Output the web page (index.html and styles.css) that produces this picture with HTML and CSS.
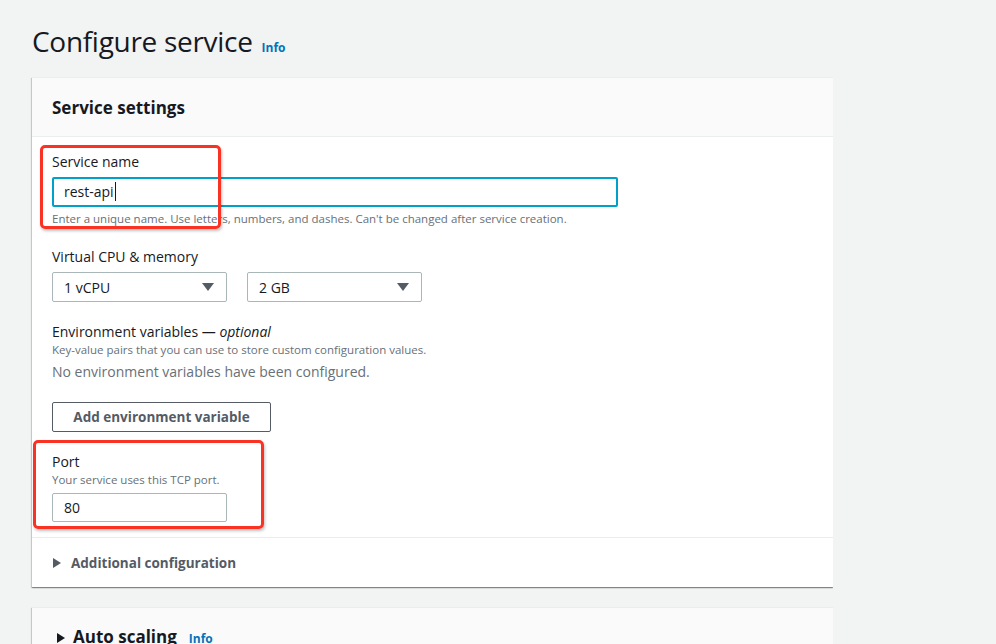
FILE: index.html
```html
<!DOCTYPE html>
<html>
<head>
<meta charset="utf-8">
<link rel="stylesheet" href="styles.css">
</head>
<body>
<div class="page">
  <h1 class="title">Configure service <a class="info">Info</a></h1>

  <div class="card">
    <div class="card-header"><h2>Service settings</h2></div>
    <div class="card-body">
      <div class="field">
        <div class="label">Service name</div>
        <div class="input focused wide"><span class="caret">rest-api</span></div>
        <div class="hint">Enter a unique name. Use letters, numbers, and dashes. Can't be changed after service creation.</div>
      </div>

      <div class="field">
        <div class="label">Virtual CPU &amp; memory</div>
        <div class="selects">
          <div class="select"><span>1 vCPU</span><span class="tri"></span></div>
          <div class="select"><span>2 GB</span><span class="tri"></span></div>
        </div>
      </div>

      <div class="field">
        <div class="label">Environment variables — <i>optional</i></div>
        <div class="hint">Key-value pairs that you can use to store custom configuration values.</div>
        <div class="empty">No environment variables have been configured.</div>
        <button class="btn">Add environment variable</button>
      </div>

      <div class="field">
        <div class="label">Port</div>
        <div class="hint">Your service uses this TCP port.</div>
        <div class="input small">80</div>
      </div>
    </div>
    <div class="card-footer">
      <span class="rtri"></span><span class="expander">Additional configuration</span>
    </div>
  </div>

  <div class="card card2">
    <div class="card-header"><h2><span class="rtri dark"></span>Auto scaling <a class="info">Info</a></h2></div>
  </div>

  <div class="annot annot1"></div>
  <div class="annot annot2"></div>
</div>
</body>
</html>
```

FILE: styles.css
```css
html, body {
  margin: 0;
  padding: 0;
  background: #f2f3f3;
  font-family: "Open Sans", "Noto Sans", Arial, sans-serif;
  color: #16191f;
  overflow: hidden;
}
.page {
  position: relative;
  padding: 23px 0 0 32px;
  width: 801px;
  height: 621px;
  overflow: hidden;
}
.title {
  margin: 0;
  font-size: 28px;
  line-height: 36px;
  font-weight: 400;
  letter-spacing: -0.3px;
  color: #16191f;
  display: flex;
  align-items: baseline;
  gap: 9px;
}
.info {
  font-size: 12px;
  font-weight: 700;
  color: #0073bb;
  letter-spacing: 0;
}
.card {
  margin-top: 11px;
  background: #fff;
  border-top: 1px solid #eaeded;
  box-shadow: 0 1px 1px 0 rgba(0,28,36,.3), 1px 1px 1px 0 rgba(0,28,36,.15), -1px 1px 1px 0 rgba(0,28,36,.15);
}
.card-header {
  background: #fafafa;
  height: 58px;
  padding: 0 20px;
  display: flex;
  align-items: center;
  border-bottom: 1px solid #eaeded;
}
.card-header h2 {
  margin: 0;
  font-size: 17px;
  font-weight: 700;
  display: flex;
  align-items: baseline;
}
.card-body {
  padding: 15px 20px 15px;
  display: flex;
  flex-direction: column;
  gap: 20px;
}
.field {
  display: flex;
  flex-direction: column;
  align-items: flex-start;
}
.label {
  font-size: 14px;
  line-height: 20px;
  margin-bottom: 5px;
}
.label i { font-style: italic; }
.field .label + .hint { margin-top: -5px; }
.hint {
  font-size: 11.5px;
  line-height: 16px;
  color: #687078;
}
.input {
  box-sizing: border-box;
  height: 30px;
  border: 1px solid #aab7b8;
  border-radius: 2px;
  padding: 0 11px;
  font-size: 14px;
  line-height: 28px;
  background: #fff;
}
.input.wide {
  width: 566px;
  margin-bottom: 4px;
}
.input.focused {
  border: 2px solid #00a1c9;
  line-height: 26px;
  padding: 0 10px;
}
.caret { border-right: 1px solid #16191f; padding-right: 1px; }
.input.small {
  width: 175px;
  margin-top: 5px;
  height: 29px;
  line-height: 27px;
}
.selects {
  display: flex;
  gap: 20px;
}
.select {
  box-sizing: border-box;
  width: 175px;
  height: 30px;
  border: 1px solid #aab7b8;
  border-radius: 2px;
  padding: 0 12px 0 11px;
  display: flex;
  align-items: center;
  justify-content: space-between;
  font-size: 14px;
}
.tri {
  width: 0;
  height: 0;
  border-left: 6px solid transparent;
  border-right: 6px solid transparent;
  border-top: 8px solid #545b64;
}
.empty {
  margin-top: 4px;
  font-size: 14px;
  line-height: 20px;
  color: #687078;
}
.btn {
  margin-top: 20px;
  box-sizing: border-box;
  height: 30px;
  width: 219px;
  background: #fff;
  border: 1px solid #545b64;
  border-radius: 2px;
  font-family: inherit;
  font-size: 13.5px;
  font-weight: 700;
  color: #545b64;
  padding: 0;
}
.card-footer {
  border-top: 1px solid #eaeded;
  height: 49px;
  padding: 0 20px 0 21px;
  display: flex;
  align-items: center;
  gap: 10px;
}
.rtri {
  width: 0;
  height: 0;
  border-top: 5px solid transparent;
  border-bottom: 5px solid transparent;
  border-left: 8px solid #545b64;
}
.rtri.dark {
  border-left-color: #16191f;
  margin: 0 8px 0 5px;
  align-self: center;
}
.expander {
  font-size: 13.5px;
  font-weight: 700;
  color: #545b64;
}
.card2 {
  margin-top: 20px;
}
.card2 .card-header {
  height: 60px;
  align-items: flex-start;
  padding-top: 17px;
  box-sizing: border-box;
}
.card2 .card-header h2 { line-height: 24px; }
.card2 .info { margin-left: 12px; }
.annot {
  position: absolute;
  box-sizing: border-box;
  border: 3px solid #fa3224;
  border-radius: 5px;
  box-shadow: 1px 2px 3px rgba(0,0,0,.25);
}
.annot1 { left: 40px; top: 145px; width: 181px; height: 84px; }
.annot2 { left: 33px; top: 440px; width: 231px; height: 89px; }
```
